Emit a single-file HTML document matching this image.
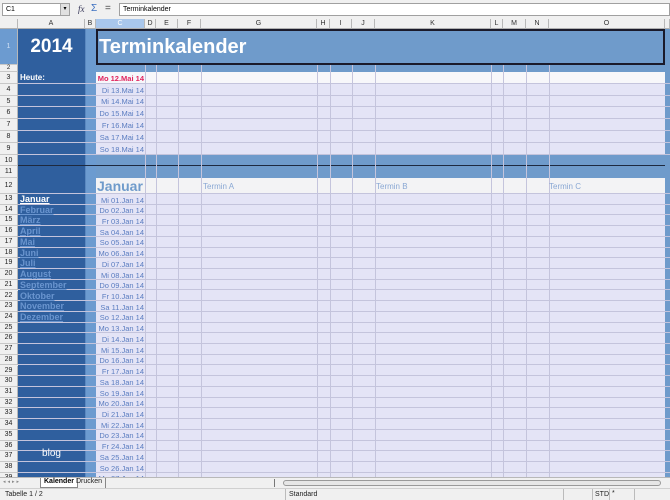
<!DOCTYPE html>
<html><head><meta charset="utf-8"><style>
*{margin:0;padding:0;box-sizing:border-box}
body{width:670px;height:500px;overflow:hidden;background:#f0f0f0;font-family:"Liberation Sans",sans-serif;position:relative}
.a{position:absolute}
.rh{position:absolute;left:0;width:18px;background:#f0f0f0;border-bottom:1px solid #c8c8c8;border-right:1px solid #b8b8b8;font-size:7px;color:#222;text-align:center}
.ch{position:absolute;top:19px;height:10px;background:#f0f0f0;border-right:1px solid #b8b8b8;border-bottom:1px solid #b0b0b0;font-size:7px;color:#333;text-align:center;line-height:10px}
.row{position:absolute;left:18px;width:652px;border-bottom:1px solid #c4c4dc}
.d{position:absolute;left:96px;width:48px;text-align:right;font-size:7.5px;color:#5a7cc0;white-space:nowrap}
.m{position:absolute;left:20px;font-size:9px;font-weight:bold;color:#6a95cf;text-decoration:underline}
.vl{position:absolute;width:1px;background:#c4c4dc}
</style></head><body>
<!-- toolbar -->
<div class="a" style="left:2px;top:3px;width:68px;height:13px;background:#fff;border:1px solid #a0a0a0;font-size:7px;line-height:11px;padding-left:3px">C1</div>
<div class="a" style="left:60px;top:4px;width:9px;height:11px;background:#e0e0e0;border-left:1px solid #aaa;font-size:6px;text-align:center;line-height:11px">▾</div>
<div class="a" style="left:78px;top:4px;font-size:9px;font-style:italic;color:#335;font-family:'Liberation Serif',serif">fx</div>
<div class="a" style="left:91px;top:3px;font-size:10px;color:#3a6fc0">Σ</div>
<div class="a" style="left:105px;top:3px;font-size:10px;color:#444">=</div>
<div class="a" style="left:119px;top:3px;width:551px;height:13px;background:#fff;border:1px solid #a0a0a0;font-size:7px;line-height:11px;padding-left:3px">Terminkalender</div>
<!-- column headers -->
<div class="a" style="left:0;top:19px;width:18px;height:10px;background:#f0f0f0;border-right:1px solid #b8b8b8;border-bottom:1px solid #b0b0b0"></div>
<div class="ch" style="left:18px;width:67px">A</div>
<div class="ch" style="left:85px;width:11px">B</div>
<div class="ch" style="left:96px;width:49px;background:#a9c7ec;color:#fff">C</div>
<div class="ch" style="left:145px;width:11px">D</div>
<div class="ch" style="left:156px;width:22px">E</div>
<div class="ch" style="left:178px;width:23px">F</div>
<div class="ch" style="left:201px;width:116px">G</div>
<div class="ch" style="left:317px;width:13px">H</div>
<div class="ch" style="left:330px;width:22px">I</div>
<div class="ch" style="left:352px;width:23px">J</div>
<div class="ch" style="left:375px;width:116px">K</div>
<div class="ch" style="left:491px;width:12px">L</div>
<div class="ch" style="left:503px;width:23px">M</div>
<div class="ch" style="left:526px;width:23px">N</div>
<div class="ch" style="left:549px;width:116px">O</div>
<div class="ch" style="left:665px;width:5px"></div>
<!-- cell background base -->
<div class="a" style="left:96px;top:29px;width:569px;height:448px;background:#e4e4f6"></div>
<div class="a" style="left:665px;top:29px;width:5px;height:448px;background:#6f9bcb"></div>
<!-- column A and B -->
<div class="a" style="left:18px;top:29px;width:67px;height:448px;background:#2f5f9e"></div>
<div class="a" style="left:85px;top:29px;width:11px;height:448px;background:#6c9bd0;border-left:1px solid #5a88c0"></div>
<!-- row 1 -->
<div class="a" style="left:96px;top:29px;width:569px;height:36px;background:#6f9bcb;border:2px solid #1a1a2a"></div>
<div class="a" style="left:18px;top:36px;width:67px;text-align:center;font-size:19px;font-weight:bold;color:#fff">2014</div>
<div class="a" style="left:99px;top:36px;font-size:20px;font-weight:bold;color:#fff">Terminkalender</div>
<!-- row 2 -->
<div class="a" style="left:96px;top:65px;width:569px;height:7px;background:#6f9bcb"></div>
<!-- row 3 white -->
<div class="a" style="left:96px;top:72px;width:569px;height:12px;background:#f7f7fa"></div>
<!-- rows 10-11 -->
<div class="a" style="left:96px;top:155px;width:569px;height:23px;background:#6f9bcb"></div>
<div class="a" style="left:18px;top:165px;width:647px;height:1px;background:#1e2a40"></div>
<!-- row 12 -->
<div class="a" style="left:96px;top:178px;width:569px;height:16px;background:#f3f3f5"></div>
<!-- vertical lines -->
<div class="vl" style="left:145px;top:65px;height:412px"></div>
<div class="vl" style="left:156px;top:65px;height:412px"></div>
<div class="vl" style="left:178px;top:65px;height:412px"></div>
<div class="vl" style="left:201px;top:65px;height:412px"></div>
<div class="vl" style="left:317px;top:65px;height:412px"></div>
<div class="vl" style="left:330px;top:65px;height:412px"></div>
<div class="vl" style="left:352px;top:65px;height:412px"></div>
<div class="vl" style="left:375px;top:65px;height:412px"></div>
<div class="vl" style="left:491px;top:65px;height:412px"></div>
<div class="vl" style="left:503px;top:65px;height:412px"></div>
<div class="vl" style="left:526px;top:65px;height:412px"></div>
<div class="vl" style="left:549px;top:65px;height:412px"></div>
<!-- row headers -->
<div class="rh" style="top:29px;height:36px;line-height:36px;background:#6c9bd0;color:#cfe0f5">1</div>
<div class="rh" style="top:65px;height:7px;line-height:7px;font-size:6px">2</div>
<div class="rh" style="top:72px;height:12px;line-height:12px">3</div>
<div class="rh" style="top:84px;height:12px;line-height:12px">4</div>
<div class="rh" style="top:96px;height:11px;line-height:11px">5</div>
<div class="rh" style="top:107px;height:12px;line-height:12px">6</div>
<div class="rh" style="top:119px;height:12px;line-height:12px">7</div>
<div class="rh" style="top:131px;height:12px;line-height:12px">8</div>
<div class="rh" style="top:143px;height:12px;line-height:12px">9</div>
<div class="rh" style="top:155px;height:11px;line-height:11px">10</div>
<div class="rh" style="top:166px;height:12px;line-height:12px">11</div>
<div class="rh" style="top:178px;height:16px;line-height:16px">12</div>
<!-- row lines rows 3-11 -->
<div class="row" style="top:72px;height:12px"></div>
<div class="row" style="top:84px;height:12px"></div>
<div class="row" style="top:96px;height:11px"></div>
<div class="row" style="top:107px;height:12px"></div>
<div class="row" style="top:119px;height:12px"></div>
<div class="row" style="top:131px;height:12px"></div>
<div class="row" style="top:143px;height:12px"></div>
<div class="row" style="top:178px;height:16px"></div>
<!-- row 3-9 content -->
<div class="a" style="left:20px;top:73px;font-size:8px;font-weight:bold;color:#fff">Heute:</div>
<div class="d" style="top:74px;color:#e0245e;font-weight:bold">Mo 12.Mai 14</div>
<div class="d" style="top:86px">Di 13.Mai 14</div>
<div class="d" style="top:97px">Mi 14.Mai 14</div>
<div class="d" style="top:109px">Do 15.Mai 14</div>
<div class="d" style="top:121px">Fr 16.Mai 14</div>
<div class="d" style="top:133px">Sa 17.Mai 14</div>
<div class="d" style="top:145px">So 18.Mai 14</div>
<!-- row 12 content -->
<div class="a" style="left:97px;top:178px;font-size:14px;font-weight:bold;color:#6f9bcb">Januar</div>
<div class="a" style="left:203px;top:182px;font-size:8px;color:#8aa8d4">Termin A</div>
<div class="a" style="left:376px;top:182px;font-size:8px;color:#8aa8d4">Termin B</div>
<div class="a" style="left:549px;top:182px;font-size:8px;color:#8aa8d4">Termin C</div>
<!-- rows 13-39 -->
<div class="row" style="top:194px;height:10.7px"></div><div class="rh" style="top:194px;height:10.7px;line-height:10px">13</div><div class="d" style="top:195.5px">Mi 01.Jan 14</div><div class="m" style="top:194px;color:#fff">Januar</div>
<div class="row" style="top:204.7px;height:10.7px"></div><div class="rh" style="top:204.7px;height:10.7px;line-height:10px">14</div><div class="d" style="top:206.2px">Do 02.Jan 14</div><div class="m" style="top:204.7px">Februar</div>
<div class="row" style="top:215.4px;height:10.8px"></div><div class="rh" style="top:215.4px;height:10.8px;line-height:10px">15</div><div class="d" style="top:216.9px">Fr 03.Jan 14</div><div class="m" style="top:215.4px">März</div>
<div class="row" style="top:226.2px;height:10.7px"></div><div class="rh" style="top:226.2px;height:10.7px;line-height:10px">16</div><div class="d" style="top:227.7px">Sa 04.Jan 14</div><div class="m" style="top:226.2px">April</div>
<div class="row" style="top:236.9px;height:10.7px"></div><div class="rh" style="top:236.9px;height:10.7px;line-height:10px">17</div><div class="d" style="top:238.4px">So 05.Jan 14</div><div class="m" style="top:236.9px">Mai</div>
<div class="row" style="top:247.6px;height:10.7px"></div><div class="rh" style="top:247.6px;height:10.7px;line-height:10px">18</div><div class="d" style="top:249.1px">Mo 06.Jan 14</div><div class="m" style="top:247.6px">Juni</div>
<div class="row" style="top:258.3px;height:10.7px"></div><div class="rh" style="top:258.3px;height:10.7px;line-height:10px">19</div><div class="d" style="top:259.8px">Di 07.Jan 14</div><div class="m" style="top:258.3px">Juli</div>
<div class="row" style="top:269px;height:10.8px"></div><div class="rh" style="top:269px;height:10.8px;line-height:10px">20</div><div class="d" style="top:270.5px">Mi 08.Jan 14</div><div class="m" style="top:269px">August</div>
<div class="row" style="top:279.8px;height:10.7px"></div><div class="rh" style="top:279.8px;height:10.7px;line-height:10px">21</div><div class="d" style="top:281.3px">Do 09.Jan 14</div><div class="m" style="top:279.8px">September</div>
<div class="row" style="top:290.5px;height:10.7px"></div><div class="rh" style="top:290.5px;height:10.7px;line-height:10px">22</div><div class="d" style="top:292px">Fr 10.Jan 14</div><div class="m" style="top:290.5px">Oktober</div>
<div class="row" style="top:301.2px;height:10.7px"></div><div class="rh" style="top:301.2px;height:10.7px;line-height:10px">23</div><div class="d" style="top:302.7px">Sa 11.Jan 14</div><div class="m" style="top:301.2px">November</div>
<div class="row" style="top:311.9px;height:10.7px"></div><div class="rh" style="top:311.9px;height:10.7px;line-height:10px">24</div><div class="d" style="top:313.4px">So 12.Jan 14</div><div class="m" style="top:311.9px">Dezember</div>
<div class="row" style="top:322.6px;height:10.8px"></div><div class="rh" style="top:322.6px;height:10.8px;line-height:10px">25</div><div class="d" style="top:324.1px">Mo 13.Jan 14</div>
<div class="row" style="top:333.4px;height:10.7px"></div><div class="rh" style="top:333.4px;height:10.7px;line-height:10px">26</div><div class="d" style="top:334.9px">Di 14.Jan 14</div>
<div class="row" style="top:344.1px;height:10.7px"></div><div class="rh" style="top:344.1px;height:10.7px;line-height:10px">27</div><div class="d" style="top:345.6px">Mi 15.Jan 14</div>
<div class="row" style="top:354.8px;height:10.7px"></div><div class="rh" style="top:354.8px;height:10.7px;line-height:10px">28</div><div class="d" style="top:356.3px">Do 16.Jan 14</div>
<div class="row" style="top:365.5px;height:10.7px"></div><div class="rh" style="top:365.5px;height:10.7px;line-height:10px">29</div><div class="d" style="top:367px">Fr 17.Jan 14</div>
<div class="row" style="top:376.2px;height:10.8px"></div><div class="rh" style="top:376.2px;height:10.8px;line-height:10px">30</div><div class="d" style="top:377.7px">Sa 18.Jan 14</div>
<div class="row" style="top:387px;height:10.7px"></div><div class="rh" style="top:387px;height:10.7px;line-height:10px">31</div><div class="d" style="top:388.5px">So 19.Jan 14</div>
<div class="row" style="top:397.7px;height:10.7px"></div><div class="rh" style="top:397.7px;height:10.7px;line-height:10px">32</div><div class="d" style="top:399.2px">Mo 20.Jan 14</div>
<div class="row" style="top:408.4px;height:10.7px"></div><div class="rh" style="top:408.4px;height:10.7px;line-height:10px">33</div><div class="d" style="top:409.9px">Di 21.Jan 14</div>
<div class="row" style="top:419.1px;height:10.7px"></div><div class="rh" style="top:419.1px;height:10.7px;line-height:10px">34</div><div class="d" style="top:420.6px">Mi 22.Jan 14</div>
<div class="row" style="top:429.8px;height:10.8px"></div><div class="rh" style="top:429.8px;height:10.8px;line-height:10px">35</div><div class="d" style="top:431.3px">Do 23.Jan 14</div>
<div class="row" style="top:440.6px;height:10.7px"></div><div class="rh" style="top:440.6px;height:10.7px;line-height:10px">36</div><div class="d" style="top:442.1px">Fr 24.Jan 14</div>
<div class="row" style="top:451.3px;height:10.7px"></div><div class="rh" style="top:451.3px;height:10.7px;line-height:10px">37</div><div class="d" style="top:452.8px">Sa 25.Jan 14</div>
<div class="row" style="top:462px;height:10.7px"></div><div class="rh" style="top:462px;height:10.7px;line-height:10px">38</div><div class="d" style="top:463.5px">So 26.Jan 14</div>
<div class="row" style="top:472.7px;height:10.7px"></div><div class="rh" style="top:472.7px;height:10.7px;line-height:10px">39</div><div class="d" style="top:474.2px">Mo 27.Jan 14</div>
<div class="a" style="left:18px;top:448px;width:67px;text-align:center;font-size:10px;color:#fff">blog</div>
<!-- tab bar -->
<div class="a" style="left:0;top:477px;width:670px;height:11px;background:#f0f0f0;border-top:1px solid #b8b8b8"></div>
<div class="a" style="left:3px;top:479px;width:32px;height:8px;font-size:5px;color:#888;letter-spacing:2px">◂◂▸▸</div>
<div class="a" style="left:40px;top:478px;height:10px;padding:0 3px;font-size:7px;font-weight:bold;background:#fff;border:1px solid #888;border-top:none">Kalender</div>
<div class="a" style="left:73px;top:478px;height:10px;padding:0 3px;font-size:7px;color:#222;border-right:1px solid #888">Drucken</div>
<div class="a" style="left:274px;top:479px;width:1px;height:8px;background:#777"></div>
<div class="a" style="left:283px;top:480px;width:378px;height:6px;background:#e6e6e6;border:1px solid #999;border-radius:3px"></div>
<!-- status bar -->
<div class="a" style="left:0;top:488px;width:670px;height:12px;background:#f0f0f0;border-top:1px solid #d0d0d0"></div>
<div class="a" style="left:5px;top:491px;font-size:7px;color:#222">Tabelle 1 / 2</div>
<div class="a" style="left:285px;top:489px;width:1px;height:11px;background:#bbb"></div>
<div class="a" style="left:289px;top:491px;font-size:7px;color:#222">Standard</div>
<div class="a" style="left:563px;top:489px;width:1px;height:11px;background:#bbb"></div>
<div class="a" style="left:592px;top:489px;width:1px;height:11px;background:#bbb"></div>
<div class="a" style="left:595px;top:491px;font-size:7px;color:#222">STD</div>
<div class="a" style="left:609px;top:489px;width:1px;height:11px;background:#bbb"></div>
<div class="a" style="left:612px;top:490px;font-size:7px;color:#222">*</div>
<div class="a" style="left:634px;top:489px;width:1px;height:11px;background:#bbb"></div>
</body></html>
